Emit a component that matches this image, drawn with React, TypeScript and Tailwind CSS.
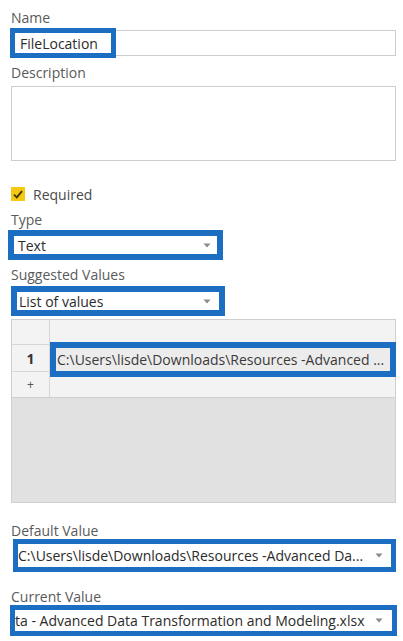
import React from 'react';

const Arrow = () => (
    <svg width="8" height="5" viewBox="0 0 8 5" className="shrink-0">
        <path d="M0.5 0.5 L7.5 0.5 L4 4.5 Z" fill="#8a8a8a" />
    </svg>
);

const Label = ({ children, className = '' }: { children: React.ReactNode; className?: string }) => (
    <div className={`text-[14px] text-[#5a5a5a] leading-[20px] h-[20px] ${className}`}>{children}</div>
);

export default function App() {
    return (
        <div className="w-[403px] h-[641px] bg-white overflow-hidden font-['Open_Sans',sans-serif] pl-[11px] pr-[7px] pt-[8px]">
            {/* Name */}
            <Label>Name</Label>
            <div className="relative mt-[2px] h-[26px] border border-[#cdcdcd] bg-white">
                <div className="absolute -left-[2px] -top-[3px] w-[106px] h-[30px] border-[5px] border-[#1b6ec2] bg-white flex items-center pl-[5px] text-[14px] text-[#2b2b2b]">
                    FileLocation
                </div>
            </div>

            {/* Description */}
            <Label className="mt-[7px]">Description</Label>
            <div className="mt-[3px] h-[75px] border border-[#cdcdcd] bg-white" />

            {/* Required */}
            <div className="mt-[23px] h-[20px] flex items-center gap-[8px]">
                <div className="w-[14px] h-[14px] bg-[#f2c811] flex items-center justify-center">
                    <svg width="10" height="9" viewBox="0 0 10 9">
                        <path d="M1 4.6 L3.8 7.4 L9 1.2" stroke="#3a3200" strokeWidth="1.8" fill="none" />
                    </svg>
                </div>
                <span className="text-[14px] text-[#4a4a4a]">Required</span>
            </div>

            {/* Type */}
            <Label className="mt-[6px]">Type</Label>
            <div className="-ml-[3px] w-[215px] h-[30px] border-[6px] border-[#1b6ec2] bg-white flex items-center justify-between pl-[4px] pr-[6px] text-[14px] text-[#2b2b2b]">
                <span>Text</span>
                <Arrow />
            </div>

            {/* Suggested Values */}
            <Label className="mt-[5px]">Suggested Values</Label>
            <div className="mt-[1px] w-[214px] h-[30px] border-[6px] border-[#1b6ec2] bg-white flex items-center justify-between pl-[2px] pr-[8px] text-[14px] text-[#2b2b2b]">
                <span>List of values</span>
                <Arrow />
            </div>

            {/* Values table */}
            <div className="relative mt-[3px] w-[385px] h-[184px] border border-[#cfcfcf] bg-[#e1e1e1] flex flex-col">
                <div className="flex h-[25px] bg-[#f3f3f3] border-b border-[#d6d6d6]">
                    <div className="w-[38px] border-r border-[#d6d6d6]" />
                    <div className="flex-1" />
                </div>
                <div className="flex h-[27px] bg-[#f3f3f3] border-b border-[#d6d6d6]">
                    <div className="w-[38px] border-r border-[#d6d6d6] flex items-center justify-center text-[14px] font-bold text-[#333]">1</div>
                    <div className="flex-1" />
                </div>
                <div className="flex h-[26px] bg-[#f3f3f3] border-b border-[#cfcfcf]">
                    <div className="w-[38px] border-r border-[#d6d6d6] flex items-center justify-center text-[12px] text-[#555]">+</div>
                    <div className="flex-1" />
                </div>
                <div className="absolute left-[38px] -right-[1px] top-[22px] h-[35px] border-[6px] border-[#1b6ec2] bg-[#ececec] flex items-center pl-[1px] text-[14px] text-[#3a3a3a] whitespace-nowrap overflow-hidden">
                    C:\Users\lisde\Downloads\Resources -Advanced ...
                </div>
            </div>

            {/* Default Value */}
            <div className="mt-[20px] h-[16px] leading-[16px] text-[14px] text-[#5a5a5a]">Default Value</div>
            <div className="ml-[2px] w-[383px] h-[33px] border-[5px] border-[#1b6ec2] bg-white flex items-center justify-between pr-[8px] text-[14px] text-[#2b2b2b] whitespace-nowrap overflow-hidden">
                <span>C:\Users\lisde\Downloads\Resources -Advanced Da...</span>
                <Arrow />
            </div>

            {/* Current Value */}
            <div className="mt-[17px] h-[16px] leading-[16px] text-[14px] text-[#5a5a5a]">Current Value</div>
            <div className="-ml-[1px] w-[387px] h-[31px] border-[5px] border-[#1b6ec2] bg-white flex items-center justify-between pr-[9px] text-[14px] text-[#2b2b2b] whitespace-nowrap overflow-hidden">
                <span>ta - Advanced Data Transformation and Modeling.xlsx</span>
                <Arrow />
            </div>
        </div>
    );
}
